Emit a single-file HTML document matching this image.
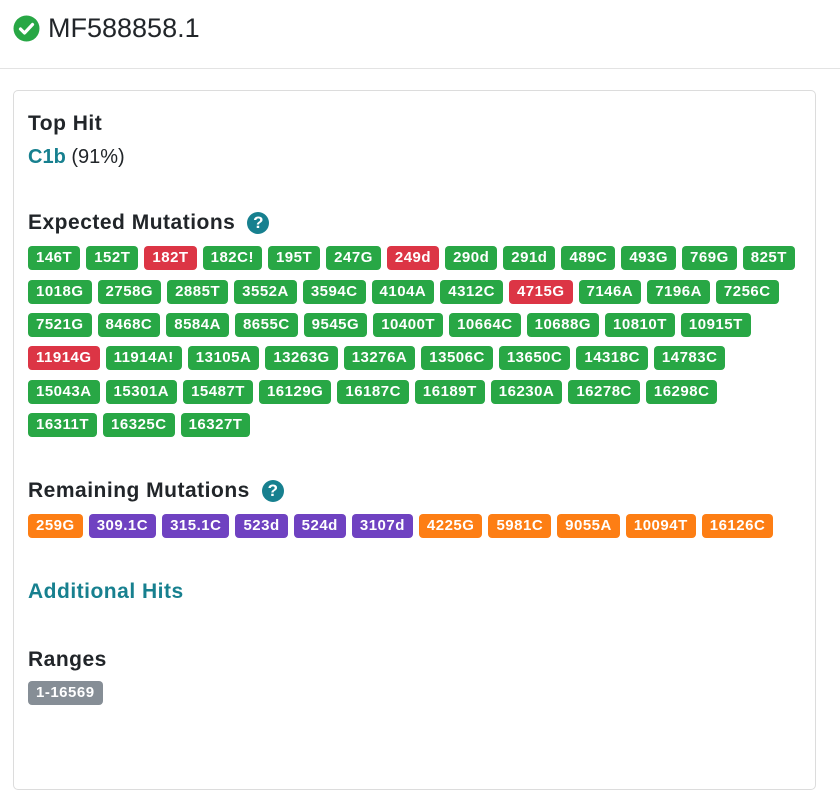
<!DOCTYPE html>
<html><head><meta charset="utf-8"><style>
*{box-sizing:border-box;margin:0;padding:0}
body{width:840px;height:713px;overflow:hidden;background:#fff;font-family:"Liberation Sans",sans-serif;color:#212529;position:relative}
.hdr{position:absolute;left:13px;top:13px;display:flex;align-items:center;font-size:27px;color:#212529}
.hdr svg{margin-right:8px}
.line{position:absolute;left:0;right:0;top:68px;border-top:1px solid #e3e3e3}
.card{position:absolute;left:13px;top:90px;width:803px;height:700px;border:1px solid #dcdcdc;border-radius:5px}
.h{position:absolute;left:28px;font-weight:bold;font-size:21px;letter-spacing:0.5px;line-height:24px;display:flex;align-items:center}
.q{display:inline-block;width:22px;height:22px;border-radius:50%;background:#17808f;color:#fff;font-size:17px;line-height:22px;text-align:center;margin-left:12px;font-weight:bold;letter-spacing:0}
.row{position:absolute;left:28px;display:flex;white-space:nowrap}
.b{display:inline-block;height:24px;line-height:24px;padding:0 8px;border-radius:4px;color:#fff;font-weight:bold;font-size:15px;letter-spacing:0.5px;margin-right:6px}
.g{background:#28a745}.r{background:#dc3545}.o{background:#fd7e14}.p{background:#6f42c1}.s{background:#868e96}
.teal{color:#17808f}
</style></head><body>
<div class="hdr"><svg width="27" height="27" viewBox="0 0 27 27"><circle cx="13.5" cy="13.5" r="13" fill="#28a745"/><path d="M7.5 14l4 4 8-8.5" stroke="#fff" stroke-width="3.2" fill="none" stroke-linecap="round" stroke-linejoin="round"/></svg>MF588858.1</div>
<div class="line"></div>
<div class="card"></div>
<div class="h" style="top:112px">Top Hit</div>
<div style="position:absolute;left:28px;top:145px;font-size:20px;line-height:24px"><b class="teal">C1b</b> (91%)</div>
<div class="h" style="top:211px">Expected Mutations <span class="q">?</span></div>
<div class="row" style="top:246px"><span class="b g">146T</span><span class="b g">152T</span><span class="b r">182T</span><span class="b g">182C!</span><span class="b g">195T</span><span class="b g">247G</span><span class="b r">249d</span><span class="b g">290d</span><span class="b g">291d</span><span class="b g">489C</span><span class="b g">493G</span><span class="b g">769G</span><span class="b g">825T</span></div>
<div class="row" style="top:280px"><span class="b g">1018G</span><span class="b g">2758G</span><span class="b g">2885T</span><span class="b g">3552A</span><span class="b g">3594C</span><span class="b g">4104A</span><span class="b g">4312C</span><span class="b r">4715G</span><span class="b g">7146A</span><span class="b g">7196A</span><span class="b g">7256C</span></div>
<div class="row" style="top:313px"><span class="b g">7521G</span><span class="b g">8468C</span><span class="b g">8584A</span><span class="b g">8655C</span><span class="b g">9545G</span><span class="b g">10400T</span><span class="b g">10664C</span><span class="b g">10688G</span><span class="b g">10810T</span><span class="b g">10915T</span></div>
<div class="row" style="top:346px"><span class="b r">11914G</span><span class="b g">11914A!</span><span class="b g">13105A</span><span class="b g">13263G</span><span class="b g">13276A</span><span class="b g">13506C</span><span class="b g">13650C</span><span class="b g">14318C</span><span class="b g">14783C</span></div>
<div class="row" style="top:380px"><span class="b g">15043A</span><span class="b g">15301A</span><span class="b g">15487T</span><span class="b g">16129G</span><span class="b g">16187C</span><span class="b g">16189T</span><span class="b g">16230A</span><span class="b g">16278C</span><span class="b g">16298C</span></div>
<div class="row" style="top:413px"><span class="b g">16311T</span><span class="b g">16325C</span><span class="b g">16327T</span></div>
<div class="h" style="top:479px">Remaining Mutations <span class="q">?</span></div>
<div class="row" style="top:514px"><span class="b o">259G</span><span class="b p">309.1C</span><span class="b p">315.1C</span><span class="b p">523d</span><span class="b p">524d</span><span class="b p">3107d</span><span class="b o">4225G</span><span class="b o">5981C</span><span class="b o">9055A</span><span class="b o">10094T</span><span class="b o">16126C</span></div>
<div class="h teal" style="top:580px">Additional Hits</div>
<div class="h" style="top:648px">Ranges</div>
<div class="row" style="top:681px"><span class="b s">1-16569</span></div>
</body></html>
